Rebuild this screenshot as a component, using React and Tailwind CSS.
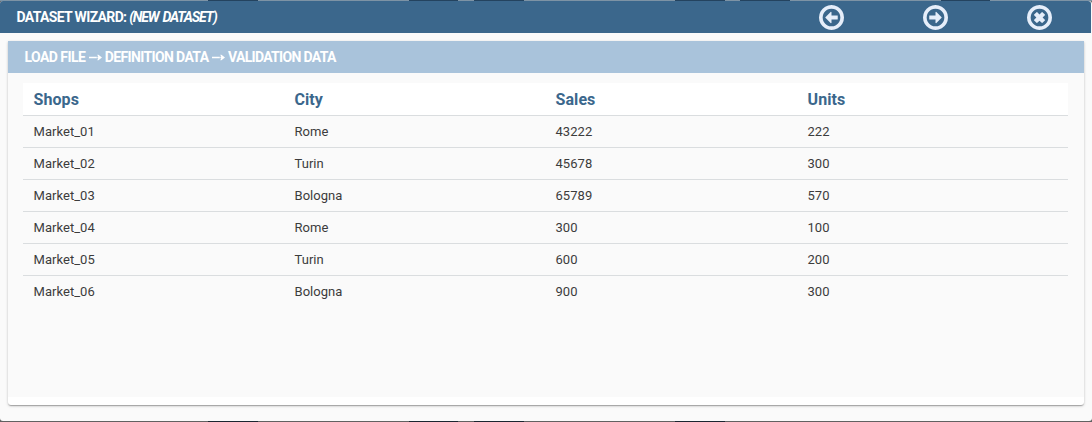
const RING =
  'M768 1184q-148 0 -273 -73t-198 -198t-73 -273t73 -273t198 -198t273 -73t273 73t198 198t73 273t-73 273t-198 198t-273 73zM1536 640q0 -209 -103 -385.5t-279.5 -279.5t-385.5 -103t-385.5 103t-279.5 279.5t-103 385.5t103 385.5t279.5 279.5t385.5 103t385.5 -103t279.5 -279.5t103 -385.5z';
const ARROW =
  'M1152 736v-192q0 -13 -9.5 -22.5t-22.5 -9.5h-352v-192q0 -14 -9 -23t-23 -9q-12 0 -24 10l-319 319q-9 9 -9 23t9 23l320 320q9 9 23 9q13 0 22.5 -9.5t9.5 -22.5v-192h352q13 0 22.5 -9.5t9.5 -22.5z';
const CROSS =
  'M1097 457l-146 -146q-10 -10 -23 -10t-23 10l-137 137l-137 -137q-10 -10 -23 -10t-23 10l-146 146q-10 10 -10 23t10 23l137 137l-137 137q-10 10 -10 23t10 23l146 146q10 10 23 10t23 -10l137 -137l137 137q10 10 23 10t23 -10l146 -146q10 -10 10 -23t-10 -23l-137 -137l137 -137q10 -10 10 -23t-10 -23z';

function CircleIcon({ shape, flip }) {
  return (
    <svg viewBox="0 0 1536 1536" className="size-[25px] fill-[#e6eefa]" aria-hidden="true">
      <g transform={flip ? 'translate(1536 1408) scale(-1 -1)' : 'translate(0 1408) scale(1 -1)'}>
        <path fillRule="evenodd" d={RING} />
        <path d={shape} />
      </g>
    </svg>
  );
}

// Thin arrow with a small break between shaft and head
function StepArrow() {
  return (
    <svg viewBox="0 0 13 7" className="mr-[3px] ml-[3.5px] h-[7px] w-[13px] fill-white" aria-hidden="true">
      <path d="M0 2.8h7.8v1.4H0zM8.4 2.8h0.9L8.2 0.7h1.2L13 3.5 9.4 6.3H8.2L9.3 4.2H8.4z" />
    </svg>
  );
}

const columns = ['Shops', 'City', 'Sales', 'Units'];
const rows = [
  ['Market_01', 'Rome', '43222', '222'],
  ['Market_02', 'Turin', '45678', '300'],
  ['Market_03', 'Bologna', '65789', '570'],
  ['Market_04', 'Rome', '300', '100'],
  ['Market_05', 'Turin', '600', '200'],
  ['Market_06', 'Bologna', '900', '300'],
];

export default function App() {
  return (
    <div className="flex h-[422px] w-[1092px] flex-col overflow-hidden bg-[#616161] font-['Roboto',sans-serif]">
      <div className="flex h-px shrink-0 bg-[#7d93a5]">
        <i className="ml-[208px] w-[50px] bg-[#24435f]" />
        <i className="ml-[151px] w-[49px] bg-[#24435f]" />
        <i className="ml-[16px] w-[50px] bg-[#24435f]" />
        <i className="ml-[151px] w-[50px] bg-[#24435f]" />
        <i className="ml-[15px] w-[50px] bg-[#24435f]" />
        <i className="ml-[151px] w-[49px] bg-[#24435f]" />
      </div>
      <main className="flex h-[420px] w-[1092px] flex-col overflow-hidden rounded-[3px] bg-[#fafafa]">
        <header className="mr-px flex h-8 shrink-0 items-center justify-between rounded-tr-[3px] bg-[#3b678c] pr-[39px] pl-[16.5px]">
          <h1 className="text-[14px] leading-8 font-bold tracking-[-0.65px] whitespace-pre text-white">
            DATASET WIZARD: <em className="tracking-[-1.12px] [word-spacing:1.5px]">(NEW DATASET)</em>
          </h1>
          <nav className="flex gap-[79px]">
            <button aria-label="Back"><CircleIcon shape={ARROW} /></button>
            <button aria-label="Next"><CircleIcon shape={ARROW} flip /></button>
            <button aria-label="Close"><CircleIcon shape={CROSS} /></button>
          </nav>
        </header>
        <section className="mx-2 mt-2 flex h-[364px] w-[1076px] flex-col rounded-b-[3px] bg-white shadow-[0_1px_3px_0_rgba(0,0,0,0.2),0_1px_1px_0_rgba(0,0,0,0.14),0_2px_1px_-1px_rgba(0,0,0,0.12)]">
          <h2 className="flex h-8 shrink-0 items-center bg-[#a9c3db] pl-[16.5px] text-[14px] leading-8 font-bold tracking-[-0.63px] text-white">
            <span className="tracking-[-0.57px]">LOAD FILE</span>
            <StepArrow />
            <span>DEFINITION DATA</span>
            <StepArrow />
            <span className="tracking-[-0.68px]">VALIDATION DATA</span>
          </h2>
          <div className="h-[324px] bg-[#fafafa] pt-[10px] pl-[15px]">
            <table className="w-[1045px] table-fixed border-collapse text-left">
              <colgroup>
                <col className="w-[261px]" />
                <col className="w-[261px]" />
                <col className="w-[252px]" />
                <col />
              </colgroup>
              <thead>
                <tr className="h-8 bg-white">
                  {columns.map((name) => (
                    <th key={name} className="p-0 pt-px pl-[10.5px] text-[16px] leading-[31px] font-bold tracking-[0.08px] text-[#3b678c]">{name}</th>
                  ))}
                </tr>
              </thead>
              <tbody>
                {rows.map((row) => (
                  <tr key={row[0]} className="h-8 border-t border-[#dadddf]">
                    {row.map((value, i) => (
                      <td key={i} className="p-0 pl-[10.5px] text-[13px] leading-[31px] tracking-[0.04px] text-[#3c3c3c]">{value}</td>
                    ))}
                  </tr>
                ))}
              </tbody>
            </table>
          </div>
        </section>
      </main>
      <div className="flex h-px shrink-0 bg-[#616161]">
        <i className="ml-[208px] w-[50px] bg-[#1b2530]" />
        <i className="ml-[151px] w-[49px] bg-[#1b2530]" />
        <i className="ml-[16px] w-[50px] bg-[#1b2530]" />
        <i className="ml-[151px] w-[50px] bg-[#1b2530]" />
      </div>
    </div>
  );
}
